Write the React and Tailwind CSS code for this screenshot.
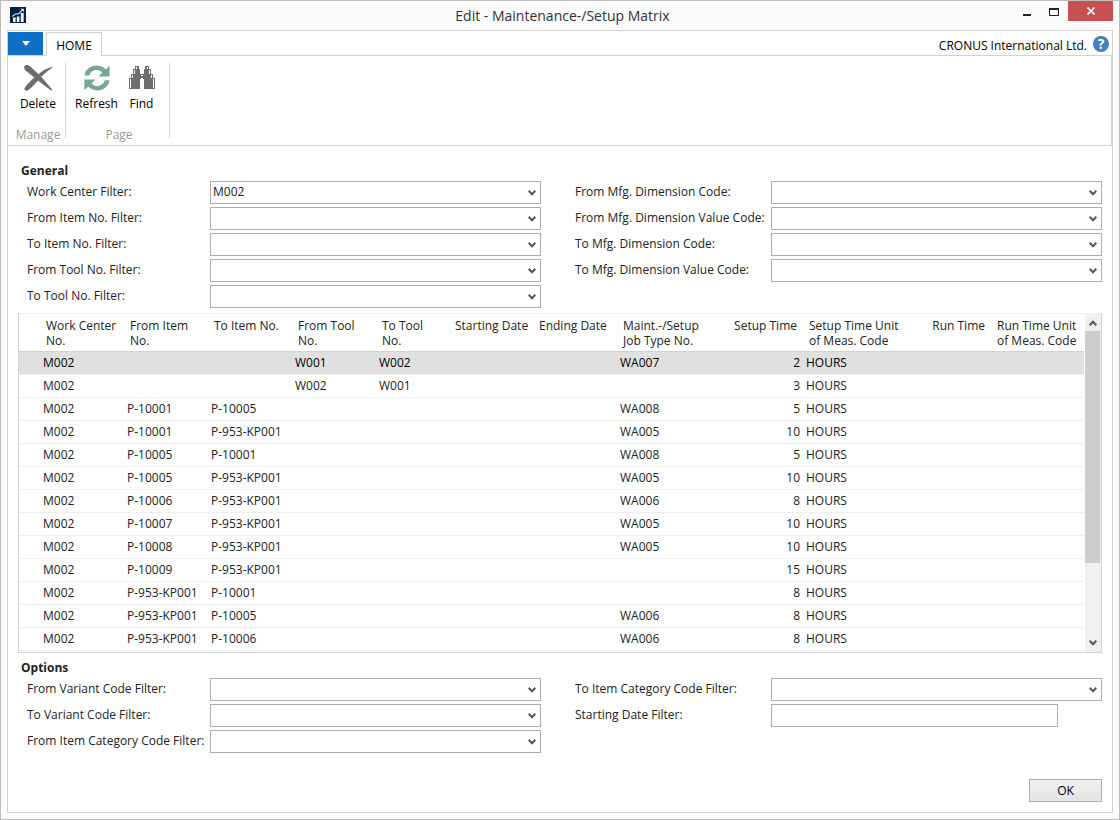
const FONT = "font-['Open_Sans','Noto_Sans',sans-serif]";

const LEFT_GENERAL = [
  { label: "Work Center Filter:", value: "M002" },
  { label: "From Item No. Filter:" },
  { label: "To Item No. Filter:" },
  { label: "From Tool No. Filter:" },
  { label: "To Tool No. Filter:" },
];
const RIGHT_GENERAL = [
  { label: "From Mfg. Dimension Code:" },
  { label: "From Mfg. Dimension Value Code:" },
  { label: "To Mfg. Dimension Code:" },
  { label: "To Mfg. Dimension Value Code:" },
];
const LEFT_OPTIONS = [
  { label: "From Variant Code Filter:" },
  { label: "To Variant Code Filter:" },
  { label: "From Item Category Code Filter:" },
];
const RIGHT_OPTIONS = [
  { label: "To Item Category Code Filter:" },
  { label: "Starting Date Filter:", text: true },
];

const COLUMNS = [
  { w: "w-[21px]", lines: [""] },
  { w: "w-[84px]", lines: ["Work Center", "No."] },
  { w: "w-[84px]", lines: ["From Item", "No."] },
  { w: "w-[84px]", lines: ["To Item No."] },
  { w: "w-[84px]", lines: ["From Tool", "No."] },
  { w: "w-[73px]", lines: ["To Tool", "No."] },
  { w: "w-[84px]", lines: ["Starting Date"] },
  { w: "w-[84px]", lines: ["Ending Date"] },
  { w: "w-[102px]", lines: ["Maint.-/Setup", "Job Type No."] },
  { w: "w-[84px]", lines: ["Setup Time"], right: true },
  { w: "w-[104px]", lines: ["Setup Time Unit", "of Meas. Code"] },
  { w: "w-[84px]", lines: ["Run Time"], right: true },
  { w: "", lines: ["Run Time Unit", "of Meas. Code"] },
];

// from item, to item, from tool, to tool, job type, setup time
const ROWS = [
  ["", "", "W001", "W002", "WA007", "2"],
  ["", "", "W002", "W001", "", "3"],
  ["P-10001", "P-10005", "", "", "WA008", "5"],
  ["P-10001", "P-953-KP001", "", "", "WA005", "10"],
  ["P-10005", "P-10001", "", "", "WA008", "5"],
  ["P-10005", "P-953-KP001", "", "", "WA005", "10"],
  ["P-10006", "P-953-KP001", "", "", "WA006", "8"],
  ["P-10007", "P-953-KP001", "", "", "WA005", "10"],
  ["P-10008", "P-953-KP001", "", "", "WA005", "10"],
  ["P-10009", "P-953-KP001", "", "", "", "15"],
  ["P-953-KP001", "P-10001", "", "", "", "8"],
  ["P-953-KP001", "P-10005", "", "", "WA006", "8"],
  ["P-953-KP001", "P-10006", "", "", "WA006", "8"],
];

function Chevron({ className = "" }) {
  return (
    <svg viewBox="0 0 8 6" className={"h-[6px] w-[8px] " + className} aria-hidden="true">
      <path d="M0.7 0.8 L4 4.2 L7.3 0.8" fill="none" stroke="#555" strokeWidth="2" />
    </svg>
  );
}

function Field({ field, labelWidth }) {
  const id = field.label.replace(/[^A-Za-z]+/g, "-").toLowerCase();
  return (
    <div className="flex h-[23px] items-center">
      <label htmlFor={id} className={"shrink-0 whitespace-nowrap pb-[2px] " + labelWidth}>
        {field.label}
      </label>
      {field.text ? (
        <input id={id} type="text" className="mr-[44px] h-[23px] min-w-0 flex-1 border border-[#abadb3] bg-white px-[2px]" />
      ) : (
        <div className="relative h-[23px] min-w-0 flex-1">
          <select
            id={id}
            defaultValue={field.value || ""}
            className="block h-[23px] w-full appearance-none border border-[#abadb3] bg-white pr-5 pb-[2px] pl-[2px]"
          >
            <option value={field.value || ""}>{field.value || ""}</option>
          </select>
          <Chevron className="pointer-events-none absolute top-[9px] right-[5px]" />
        </div>
      )}
    </div>
  );
}

function Fields({ left, right }) {
  return (
    <div className="flex gap-[34px] pr-[10px] pl-[19px]">
      <div className="flex min-w-0 flex-[1_1_183px] flex-col gap-[3px]">
        {left.map((f) => (
          <Field key={f.label} field={f} labelWidth="w-[183px]" />
        ))}
      </div>
      <div className="flex min-w-0 flex-[1_1_196px] flex-col gap-[3px]">
        {right.map((f) => (
          <Field key={f.label} field={f} labelWidth="w-[196px]" />
        ))}
      </div>
    </div>
  );
}

function AppIcon() {
  return (
    <svg viewBox="0 0 16 16" className="h-4 w-4" aria-hidden="true">
      <rect width="16" height="16" fill="#02204d" />
      <path d="M3 10.5h2.6V15H3zM6.8 9.5h2.6V15H6.8zM10.8 6h2.9v9h-2.9z" fill="#fff" />
      <path d="M2 9.4 L6 6.8 L8.4 7 L12.6 3" fill="none" stroke="#cfd8e6" strokeWidth="1.2" />
      <path d="M10.6 1.8h3.2V5z" fill="#fff" />
    </svg>
  );
}

function DeleteIcon() {
  return (
    <svg viewBox="0 0 30 28" className="h-7 w-[30px]" aria-hidden="true">
      <path
        d="M2.4 1.2 C4.5 0.4 6.4 1.2 8.4 3.4 L15.6 10.2 C19 7 23.5 4.2 28.6 3 C29.4 3 29.6 3.8 28.8 4.2 C24.8 6.4 21.4 9.6 18.2 12.8 L28.9 25.2 C29.3 26.2 28.4 26.8 27.6 26.2 L15 16.4 C11.6 20 8.6 23.6 5.6 26 C3.6 27.4 1 26.4 1.4 24.2 C3.8 20.4 7.6 16.6 11.4 13.4 L3.2 7 C1 5 0.4 2 2.4 1.2 Z"
        fill="#6d6d6d"
      />
    </svg>
  );
}

function RefreshIcon() {
  return (
    <svg viewBox="0 0 28 28" className="h-7 w-7" aria-hidden="true">
      <g fill="#77a894">
        <path d="M1.4 11.6 C2.2 5.6 7.4 1.4 13.6 1.4 C17.4 1.4 20.6 3 22.8 5.4 L26.6 1.8 V12.4 H15.6 L19.4 8.6 C18 7 16 6 13.6 6 C10 6 7.2 8.4 6.2 11.6 Z" />
        <path d="M26.6 16.2 C25.8 22.2 20.6 26.4 14.4 26.4 C10.6 26.4 7.4 24.8 5.2 22.6 L1.4 26.2 V15.4 H12.4 L8.6 19.4 C10 21 12 22 14.4 22 C18 22 20.8 19.4 21.8 16.2 Z" />
      </g>
    </svg>
  );
}

function FindIcon() {
  return (
    <svg viewBox="0 0 26 24" className="h-6 w-[26px]" aria-hidden="true">
      <g fill="#6d6d6d">
        <path d="M6 0h4v3h1v5h1v5h-1v10H0V12h2V8h2V3h2z" />
        <path d="M20 0h-4v3h-1v5h-1v5h1v10h11V12h-2V8h-2V3h-2z" />
        <path d="M11 8h4v4h-4z" />
      </g>
      <path
        d="M1.5 13v9M24.5 13v9M3.5 9v3M22.5 9v3M5.5 4v4M20.5 4v4M7.5 1v2M18.5 1v2M12 9.5h2"
        stroke="#fff"
        strokeWidth="1"
      />
    </svg>
  );
}

function RibbonButton({ icon, label }) {
  return (
    <button type="button" className="flex w-10 flex-col items-center gap-1 text-black">
      <span className="flex h-7 items-center">{icon}</span>
      <span className="leading-4">{label}</span>
    </button>
  );
}

export default function App() {
  return (
    <div className={"flex min-h-screen flex-col border border-[#bcbcbc] bg-[#fbfbfb] px-[6px] pb-[6px] text-[12px] leading-[15px] text-[#222] " + FONT}>
      <header className="flex h-[29px] items-start">
        <div className="pt-[6px] pl-[3px]">
          <AppIcon />
        </div>
        <h1 className="flex-1 pt-[5px] pl-[85px] text-center text-[14px] leading-5 text-[#333]">
          Edit - Maintenance-/Setup Matrix
        </h1>
        <button type="button" aria-label="Minimize" className="flex h-[19px] w-[26px] items-center justify-center">
          <span className="mt-2 h-[2px] w-2 bg-[#222]" />
        </button>
        <button type="button" aria-label="Maximize" className="flex h-[21px] w-7 items-center justify-center">
          <span className="h-2 w-[10px] border border-t-2 border-[#222]" />
        </button>
        <button type="button" aria-label="Close" className="flex h-5 w-[45px] items-center justify-center bg-[#c75050]">
          <svg viewBox="0 0 8 8" className="h-2 w-2" aria-hidden="true">
            <path d="M0.5 0.5 L7.5 7.5 M7.5 0.5 L0.5 7.5" stroke="#fff" strokeWidth="1.6" />
          </svg>
        </button>
      </header>

      <div className="flex flex-1 flex-col border border-[#d2d2d2] bg-white">
        <nav className="flex h-[25px] border-b border-[#d2d2d2] pt-px">
          <button type="button" aria-label="Application menu" className="flex h-[23px] w-[35px] items-center justify-center bg-[#0f6fc6]">
            <svg viewBox="0 0 8 5" className="h-[5px] w-2" aria-hidden="true">
              <path d="M0 0h8L4 5z" fill="#fff" />
            </svg>
          </button>
          <button type="button" className="ml-[3px] h-6 w-14 border border-b-0 border-[#d2d2d2] bg-white pt-[2px] text-black">
            HOME
          </button>
          <div className="flex flex-1 items-center justify-end gap-[6px] pr-[3px] text-black">
            <span className="pt-[3px]">CRONUS International Ltd.</span>
            <button type="button" aria-label="Help" className="flex h-4 w-4 items-center justify-center rounded-full bg-[#4a7ebb] text-[14px] font-bold text-white">
              ?
            </button>
          </div>
        </nav>

        <section className="flex h-[90px] border-r border-b border-[#d2d2d2] py-[7px]">
          <div className="flex w-[58px] flex-col items-center justify-between border-r border-[#d2d2d2] pt-px pl-[3px]">
            <RibbonButton icon={<DeleteIcon />} label="Delete" />
            <span className="-mb-[4px] text-[#999]">Manage</span>
          </div>
          <div className="flex w-[104px] flex-col items-center justify-between border-r border-[#d2d2d2] pt-px pl-[3px]">
            <div className="flex gap-[5px]">
              <RibbonButton icon={<RefreshIcon />} label="Refresh" />
              <RibbonButton icon={<FindIcon />} label="Find" />
            </div>
            <span className="-mb-[4px] text-[#999]">Page</span>
          </div>
        </section>

        <main className="flex flex-1 flex-col pt-[17px]">
          <h2 className="h-[18px] pl-[13px] font-bold">General</h2>
          <Fields left={LEFT_GENERAL} right={RIGHT_GENERAL} />

          <div className="mt-[5px] mr-[10px] ml-[10px] flex border border-[#d2d2d2] border-t-[#eee]">
            <div className="min-w-0 flex-1 pb-px">
              <table className="w-full table-fixed border-collapse">
                <thead>
                  <tr className="h-[37px] bg-white">
                    {COLUMNS.map((c, i) => (
                      <th
                        key={i}
                        scope="col"
                        className={"px-[6px] pt-1 align-top font-normal whitespace-nowrap " + c.w + (c.right ? " text-right" : " text-left")}
                      >
                        {c.lines.map((l) => (
                          <span key={l} className="block">{l}</span>
                        ))}
                      </th>
                    ))}
                  </tr>
                </thead>
                <tbody>
                  {ROWS.map(([fi, ti, ft, tt, job, setup], r) => (
                    <tr
                      key={r}
                      className={
                        "h-[23px] border-b border-[#eee] [&>td]:px-[3px] [&>td]:whitespace-nowrap " +
                        (r === 0 ? "border-t border-t-[#d2d2d2] bg-[#e0e0e0] text-black" : "")
                      }
                    >
                      <td></td>
                      <td>M002</td>
                      <td>{fi}</td>
                      <td>{ti}</td>
                      <td>{ft}</td>
                      <td>{tt}</td>
                      <td></td>
                      <td></td>
                      <td>{job}</td>
                      <td className="text-right">{setup}</td>
                      <td>HOURS</td>
                      <td></td>
                      <td></td>
                    </tr>
                  ))}
                </tbody>
              </table>
            </div>
            <div className="ml-px flex w-4 flex-col bg-[#f0f0f0]">
              <button type="button" aria-label="Scroll up" className="flex h-[17px] items-center justify-center">
                <Chevron className="rotate-180" />
              </button>
              <div className="mr-px h-[232px] bg-[#cdcdcd]" />
              <button type="button" aria-label="Scroll down" className="mt-auto flex h-[17px] items-center justify-center">
                <Chevron />
              </button>
            </div>
          </div>

          <h2 className="mt-[7px] h-[18px] pl-[13px] font-bold">Options</h2>
          <Fields left={LEFT_OPTIONS} right={RIGHT_OPTIONS} />

          <footer className="mt-auto flex justify-end pr-[10px] pb-[10px]">
            <button type="button" className="h-[23px] w-[73px] border border-[#acacac] bg-linear-to-b from-[#f0f0f0] to-[#e4e4e4] text-black">
              OK
            </button>
          </footer>
        </main>
      </div>
    </div>
  );
}
